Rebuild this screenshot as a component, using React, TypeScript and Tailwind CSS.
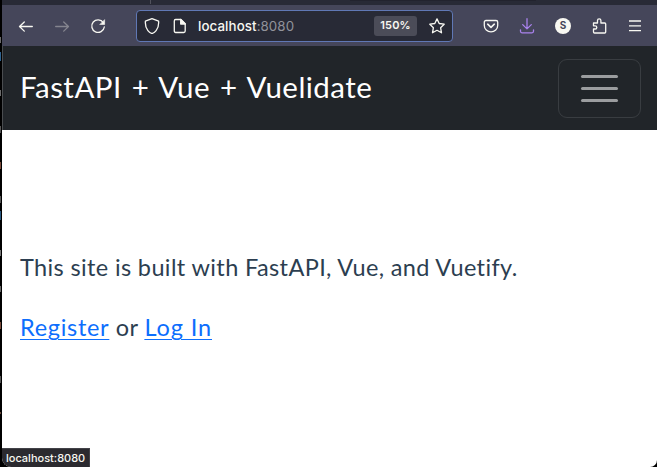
import React from "react";

const ui = "font-['Inter','Liberation_Sans',sans-serif]";

const marks = [
  { h: "h-[6px]", mt: "mt-[37px]", c: "bg-[#6b6b6b]" },
  { h: "h-[9px]", mt: "mt-[9px]", c: "bg-[#2f6390]" },
  { h: "h-[6px]", mt: "mt-[29px]", c: "bg-[#6b6b6b]" },
  { h: "h-[7px]", mt: "mt-[30px]", c: "bg-[#555555]" },
  { h: "h-[7px]", mt: "mt-[29px]", c: "bg-[#7a4a3a]" },
  { h: "h-[7px]", mt: "mt-[27px]", c: "bg-[#555555]" },
  { h: "h-[9px]", mt: "mt-[8px]", c: "bg-[#28577f]" },
  { h: "h-[6px]", mt: "mt-[30px]", c: "bg-[#777777]" },
  { h: "h-[6px]", mt: "mt-[30px]", c: "bg-[#666666]" },
  { h: "h-[7px]", mt: "mt-[30px]", c: "bg-[#7a4a3a]" },
  { h: "h-[7px]", mt: "mt-[47px]", c: "bg-[#555555]" },
  { h: "h-[2px]", mt: "mt-[29px]", c: "bg-[#6a4a3a]" },
];

function Icon({ children, className = "" }: { children: React.ReactNode; className?: string }) {
  return (
    <svg width="16" height="16" viewBox="0 0 16 16" fill="none" stroke="currentColor" strokeWidth="1.3" strokeLinecap="round" strokeLinejoin="round" className={"shrink-0 " + className}>
      {children}
    </svg>
  );
}

function Toolbar() {
  return (
    <div className="flex h-[41px] shrink-0 items-center bg-[#45465a] text-[#f8f8f2]">
      <Icon className="ml-[16px]"><path d="M14.3 8.500H1.800M6.300 4L1.500 8.500l4.800 4.600" /></Icon>
      <Icon className="ml-[20px] text-[#85858f]"><path d="M1.700 8.500h12.500M9.700 4l4.800 4.500-4.800 4.600" /></Icon>
      <Icon className="ml-[20px]">
        <path d="M13.300 4.600A6.300 6.300 0 1 0 14.300 9" />
        <path d="M14.600 2v4.500h-4.500z" fill="currentColor" strokeWidth=".6" />
      </Icon>
      <div className="ml-[30px] flex h-8 w-[317px] shrink-0 items-center rounded-[4px] border border-[#6078b5] bg-[#282a36]">
        <Icon className="ml-[7px]"><path d="M8 .6L14.600 3.100c.3 4-.5 7.100-2.500 9.500-1.200 1.500-2.600 2.400-4.100 3-1.500-.6-2.900-1.500-4.100-3C1.900 10.200 1.100 7.100 1.400 3.100z" /></Icon>
        <Icon className="ml-[12px]">
          <path d="M3.600 1.500h5.300l4.300 4.300v7.300c0 .8-.5 1.400-1.400 1.400H3.600c-.8 0-1.300-.6-1.300-1.400V2.900c0-.8.5-1.400 1.300-1.400z" />
          <path d="M8.700 1.500l4.500 4.500H8.700z" fill="currentColor" />
        </Icon>
        <span className={`ml-[10px] w-[100px] whitespace-nowrap text-[13.300px] leading-4 tracking-[0.09px] text-[#f8f8f2] ${ui}`}>
          <span className="font-medium">localhost</span><span className="text-[#92939b]">:8080</span>
        </span>
        <span className={`ml-auto flex h-5 w-[43px] items-center justify-center rounded-[3px] bg-[#4b4c58] text-[11px] font-semibold tracking-[0.1px] ${ui}`}>150%</span>
        <Icon className="ml-[12px] mr-[7px]"><path d="M8 .9l2.200 4.600 5 .7-3.600 3.500.9 5.100L8 12.300l-4.500 2.500.9-5.100L.8 6.200l5-.7z" /></Icon>
      </div>
      <Icon className="ml-[30px]">
        <path d="M3 2.500h10c1 0 1.700.6 1.700 1.600v3.300c0 3.700-3 6.400-6.700 6.400S1.300 11.100 1.300 7.400V4.100c0-1 .7-1.600 1.700-1.600z" />
        <path d="M4.700 6.200L8 9.300l3.300-3.100" strokeWidth="1.600" />
      </Icon>
      <Icon className="ml-[20px] text-[#a982ed]"><path d="M8 .7v10.100M3.700 6.600L8 10.900l4.300-4.300M1.500 11.800v1.500c0 .9.600 1.500 1.500 1.500h10c.9 0 1.500-.6 1.500-1.500v-1.500" /></Icon>
      <span className={`ml-[20px] flex size-4 shrink-0 items-center justify-center rounded-full bg-[#f8f8f2] text-[10px] font-bold text-[#45465a] ${ui}`}>S</span>
      <Icon className="ml-[21px]"><path d="M1.500 5h4V2.500a1.700 1.700 0 0 1 3.400 0V5h3.800c.6 0 1 .4 1 1v8c0 .6-.4 1-1 1H2.500c-.6 0-1-.4-1-1v-3h1.700a1.600 1.600 0 0 0 0-3.200H1.500z" /></Icon>
      <Icon className="ml-[19px]"><path d="M2 3h12M2 7.800h12M2 12.600h12" strokeLinecap="butt" /></Icon>
    </div>
  );
}

export default function App() {
  return (
    <div className="relative flex h-[467px] w-[657px] overflow-hidden bg-black font-['Lato','Liberation_Sans',sans-serif]">
      <div className="flex w-[2px] shrink-0 flex-col bg-black">
        {marks.map((m, i) => <div key={i} className={`w-px shrink-0 ${m.h} ${m.mt} ${m.c}`} />)}
      </div>
      <div className="flex min-w-0 flex-1 flex-col overflow-hidden rounded-bl-[9px] rounded-br-[7px] bg-white">
        <div className="flex h-[5px] shrink-0 bg-[#282a36]">
          <div className="h-1 w-[149px] border-r border-[#50515c]" />
          <div className="ml-[199px] h-px w-[186px] bg-[#22232e]" />
        </div>
        <Toolbar />
        <nav className="flex h-[84px] shrink-0 items-start justify-between border-l border-[#4a4d50] bg-[#212529] pl-[17px] pr-4">
          <span className="mt-[18px] whitespace-nowrap text-[29.500px] leading-[45px] tracking-[0.450px] text-white [word-spacing:2px]">FastAPI + Vue + Vuelidate</span>
          <button aria-label="Toggle navigation" className="mt-[13px] flex h-[59px] w-[83px] flex-col items-center justify-center gap-[9px] rounded-[9px] border border-[#393d41]">
            <span className="h-[3px] w-[37px] rounded-full bg-[#9b9d9f]" />
            <span className="h-[3px] w-[37px] rounded-full bg-[#9b9d9f]" />
            <span className="h-[3px] w-[37px] rounded-full bg-[#9b9d9f]" />
          </button>
        </nav>
        <main className="flex flex-1 flex-col pl-[18px] pt-[119px] text-[23.500px] leading-9 text-[#2c3e50]">
          <p className="whitespace-nowrap tracking-[0.370px]">This site is built with FastAPI, Vue, and Vuetify.</p>
          <p className="mt-6 whitespace-nowrap tracking-[0.400px]">
            <a href="#" className="tracking-[0.700px] text-[#0d6efd] underline decoration-1 underline-offset-[3px]">Register</a> or <a href="#" className="tracking-[0.900px] text-[#0d6efd] underline decoration-1 underline-offset-[3px]">Log In</a>
          </p>
        </main>
        <div className={`flex h-[19px] w-[88px] shrink-0 items-center border-r border-t border-[#424248] bg-[#2b2a2f] pl-[4px] text-[11px] font-medium leading-none text-[#f8f8f2] ${ui}`}>localhost:8080</div>
      </div>
    </div>
  );
}
